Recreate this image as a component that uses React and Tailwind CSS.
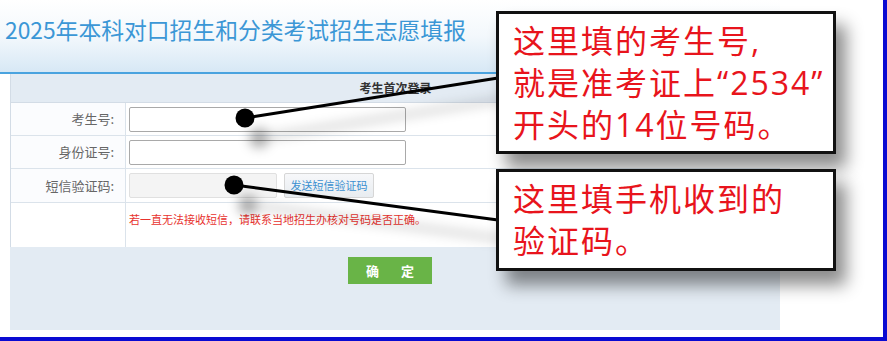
const cjk = { fontFamily: '"Noto Sans CJK SC", "Liberation Sans", sans-serif' };
const callout = { fontFamily: '"Open Sans", "Noto Sans CJK SC", sans-serif' };

function Row({ label, h, children }) {
  return (
    <div className={`grid grid-cols-[115px_1fr] border-b border-[#dbe3eb] ${h}`}>
      <div className="flex items-center justify-end border-r border-[#dbe3eb] bg-[#fbfcfe] pr-[11px] text-[13px] text-[#666]">
        {label}
      </div>
      <div className="flex items-center gap-[7px] bg-white pl-[3px]">{children}</div>
    </div>
  );
}

export default function App() {
  return (
    <div
      style={cjk}
      className="relative h-[341px] w-[887px] overflow-hidden border-b-[4px] border-r-[4px] border-[#0a0ad2] bg-white"
    >
      {/* 页头 */}
      <div className="h-[74px] w-[780px] border-b-2 border-[#4aa3df] bg-gradient-to-b from-white via-[#f3f8fc] to-[#d7e8f5] pl-[5px] pt-[17px]">
        <h1 className="text-[22.8px] leading-[26px] font-normal text-[#3b97d6]">
          2025年本科对口招生和分类考试招生志愿填报
        </h1>
      </div>

      {/* 登录面板 */}
      <div className="ml-[10px] h-[256px] w-[770px] bg-[#e3ebf3]">
        <div className="flex h-[28px] items-center justify-center border-l border-[#d3dce6] text-[12px] font-bold text-[#333]">
          考生首次登录
        </div>
        <div className="border-l border-t border-[#d3dce6]">
          <Row label="考生号:" h="h-[33px]">
            <div className="h-[25px] w-[277px] rounded-[2px] border border-[#a9a9a9] bg-white" />
          </Row>
          <Row label="身份证号:" h="h-[33px]">
            <div className="h-[25px] w-[277px] rounded-[2px] border border-[#a9a9a9] bg-white" />
          </Row>
          <Row label="短信验证码:" h="h-[34px]">
            <div className="h-[25px] w-[148px] rounded-[2px] border border-[#e0e0e0] bg-[#f4f4f4]" />
            <div className="flex h-[25px] w-[90px] items-center justify-center rounded-[2px] border border-[#d6d6d6] bg-gradient-to-b from-[#f7f8fa] to-[#e8ecf0] text-[11px] text-[#3a8fd0]">
              发送短信验证码
            </div>
          </Row>
          <div className="grid h-[44px] grid-cols-[115px_1fr]">
            <div className="border-r border-[#dbe3eb] bg-white" />
            <div className="bg-white pl-[3px] pt-[8px] text-[11px] text-[#e8322e]">
              若一直无法接收短信，请联系当地招生办核对号码是否正确。
            </div>
          </div>
        </div>
        <div className="mt-[10px] flex justify-center pr-[10px]">
          <button className="flex h-[27px] w-[84px] items-center justify-center gap-[22px] bg-[#69b447] text-[13px] font-bold text-white">
            <span>确</span>
            <span>定</span>
          </button>
        </div>
      </div>

      {/* 标注连线 */}
      <svg className="absolute left-0 top-0" width="887" height="341">
        <defs>
          <filter id="sh" x="-50%" y="-50%" width="200%" height="200%">
            <feDropShadow dx="14" dy="20" stdDeviation="6" floodColor="#000" floodOpacity="0.35" />
          </filter>
        </defs>
        <g filter="url(#sh)">
          <line x1="245" y1="118" x2="498" y2="78" stroke="#000" strokeWidth="3" />
          <circle cx="245" cy="118" r="9.5" fill="#000" />
          <line x1="234" y1="185" x2="498" y2="220" stroke="#000" strokeWidth="3" />
          <circle cx="234" cy="185" r="9.5" fill="#000" />
        </g>
      </svg>

      {/* 标注框 */}
      <div
        style={callout}
        className="absolute left-[496px] top-[11px] h-[143px] w-[340px] border-[3px] border-[#111] bg-white pl-[14px] pt-[6px] text-[32px] leading-[42px] tracking-[2px] text-[#e8141c] shadow-[10px_14px_16px_rgba(0,0,0,0.45)]"
      >
        <div>这里填的考生号,</div>
        <div>就是准考证上“2534”</div>
        <div>开头的14位号码。</div>
      </div>
      <div
        style={callout}
        className="absolute left-[496px] top-[169px] h-[102px] w-[340px] border-[3px] border-[#111] bg-white pl-[14px] pt-[6px] text-[32px] leading-[42px] tracking-[2px] text-[#e8141c] shadow-[10px_14px_16px_rgba(0,0,0,0.45)]"
      >
        <div>这里填手机收到的</div>
        <div>验证码。</div>
      </div>
    </div>
  );
}
